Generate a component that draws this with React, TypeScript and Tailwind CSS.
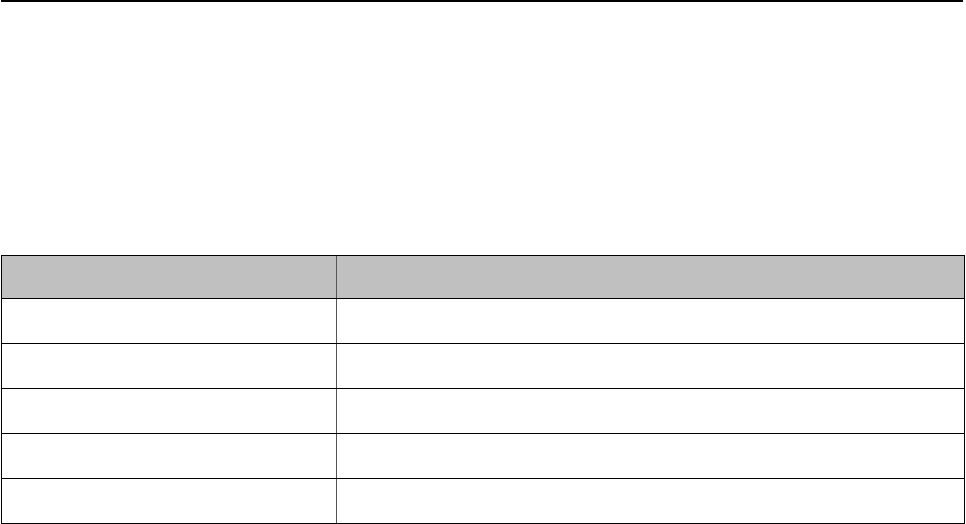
const rows = [0, 1, 2, 3, 4];

const App = () => {
  return (
    <div className="w-[966px] h-[524px] bg-white font-['Liberation_Sans',sans-serif]">
      <div className="ml-px mr-[3px] h-[2px] bg-black" />
      <div className="pt-[253px] pl-px pr-px">
        <div className="border-l border-r border-b border-black">
          <div className="grid grid-cols-[335px_1fr] h-[44px] bg-[#c0c0c0] border-t border-b border-black">
            <div className="border-r border-[#555555]" />
            <div />
          </div>
          {rows.map((r) => (
            <div
              key={r}
              className={
                r === rows.length - 1
                  ? "grid grid-cols-[335px_1fr] h-[44px]"
                  : "grid grid-cols-[335px_1fr] h-[45px] border-b border-black"
              }
            >
              <div className="border-r border-[#555555]" />
              <div />
            </div>
          ))}
        </div>
      </div>
    </div>
  );
};

export default App;
